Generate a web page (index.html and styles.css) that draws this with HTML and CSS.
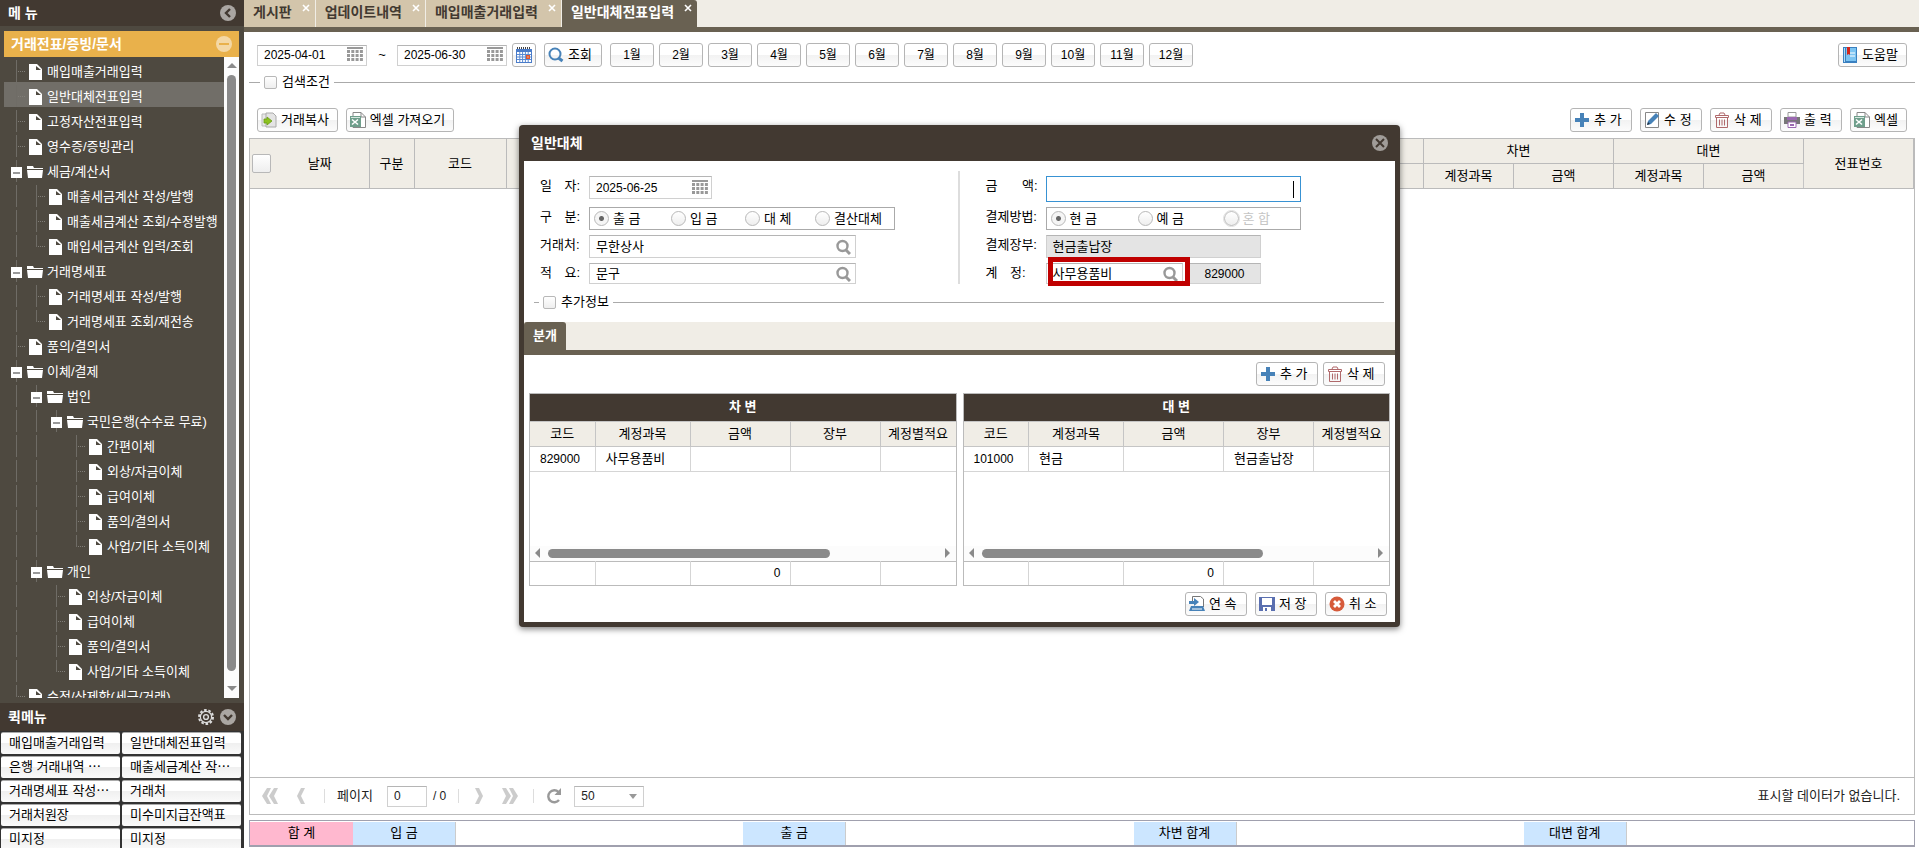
FILE: index.html
```html
<!DOCTYPE html>
<html lang="ko">
<head>
  <meta charset="UTF-8">
  <title>일반대체전표입력</title>
  <link rel="stylesheet" href="styles.css">
</head>
<body>

  <!-- icon sprite -->
  <svg class="sprite" width="0" height="0">
    <symbol id="i-file" viewBox="0 0 16 16"><path d="M2 0h8l5 5v11H2z" fill="#fff"/><path d="M9 2v4h5z" fill="#4e4940"/></symbol>
    <symbol id="i-folder" viewBox="0 0 16 16"><path d="M0 2h6l1 2h9v1H0z" fill="#fff"/><path d="M0 6h16l-1 8H1z" fill="#fff"/></symbol>
    <symbol id="i-left" viewBox="0 0 16 16"><circle cx="8" cy="8" r="8" fill="#aaa6a2"/><path d="M10 4L6 8l4 4" fill="none" stroke="#423931" stroke-width="2.4"/></symbol>
    <symbol id="i-down" viewBox="0 0 16 16"><circle cx="8" cy="8" r="8" fill="#aaa6a2"/><path d="M4 6l4 4 4-4" fill="none" stroke="#423931" stroke-width="2.4"/></symbol>
    <symbol id="i-minus" viewBox="0 0 16 16"><circle cx="8" cy="8" r="8" fill="#f4d8a5"/><path d="M3 8h10" stroke="#e9b14b" stroke-width="2"/></symbol>
    <symbol id="i-close" viewBox="0 0 16 16"><circle cx="8" cy="8" r="8" fill="#a09c98"/><path d="M4 4l8 8M12 4l-8 8" stroke="#423931" stroke-width="2"/></symbol>
    <symbol id="i-gear" viewBox="0 0 16 16"><circle cx="8" cy="8" r="7" fill="none" stroke="#ddd" stroke-width="2" stroke-dasharray="2.6 1.8"/><circle cx="8" cy="8" r="5.6" fill="none" stroke="#ddd" stroke-width="1.2"/><circle cx="8" cy="8" r="2.4" fill="none" stroke="#ddd" stroke-width="1.4"/></symbol>
    <symbol id="i-x" viewBox="0 0 8 8"><path d="M1 1l6 6M7 1L1 7" stroke="#fff" stroke-width="1.6"/></symbol>
    <symbol id="i-date" viewBox="0 0 16 16"><path d="M0 0h16v2H0z" fill="#999"/><path d="M0 4.500h16M0 8.500h16M0 12.500h16" stroke="#999" stroke-width="3" stroke-dasharray="3 1.3"/></symbol>
    <symbol id="i-cal" viewBox="0 0 16 16"><path d="M0 2h16v14H0z" fill="#4a7cc9"/><path d="M1 1h14" stroke="#444" stroke-width="2" stroke-dasharray="1 1"/><path d="M1 5h14v10H1z" fill="#fff"/><path d="M1 7.5h14M1 10h14M1 12.5h14M3.8 5v10M6.6 5v10M9.4 5v10M12.2 5v10" stroke="#5a8bd4"/><path d="M10 8h4v4h-4z" fill="#e0562e"/><path d="M11.500 9.500h1v1h-1z" fill="#fff"/></symbol>
    <symbol id="i-find" viewBox="0 0 16 16"><circle cx="7" cy="7" r="5.5" fill="none" stroke="#4782b8" stroke-width="2"/><path d="M10.500 11l4 3" stroke="#4782b8" stroke-width="3"/></symbol>
    <symbol id="i-search" viewBox="0 0 16 16"><circle cx="7.500" cy="7" r="5" fill="none" stroke="#999" stroke-width="2.400"/><path d="M11 11l4 4" stroke="#999" stroke-width="3"/></symbol>
    <symbol id="i-help" viewBox="0 0 16 16"><path d="M1 0h14v16H1z" fill="#3a80c0"/><path d="M4 1h10v13H4z" fill="#7cc4f2"/><path d="M2 1h1v14H2z" fill="#b5dcf5"/><path d="M5 0h3v8L6.500 7 5 8z" fill="#d3281c"/><path d="M8 6h5M8 9h5" stroke="#fff"/></symbol>
    <symbol id="i-copy" viewBox="0 0 16 16"><path d="M1 2h8v12H1z" fill="#e8e8e8" stroke="#bbb"/><path d="M5 1h7l3 3v11H5z" fill="#e4e4e4" stroke="#aaa"/><path d="M3 7h3V5l5 4-5 4v-2H3z" fill="#8cc21f" stroke="#6b9c14" stroke-width=".8"/></symbol>
    <symbol id="i-excel" viewBox="0 0 16 16"><path d="M3 .5h8l4.500 4.500v10.500H3z" fill="#fff" stroke="#888"/><path d="M11 .5V5h4.500" fill="none" stroke="#888"/><path d="M0 4h11v11H0z" fill="#6f9f8c"/><path d="M2 7.500l6 5M8 7.500L2 12.500" stroke="#fff" stroke-width="1.6"/><path d="M1 5.500h9" stroke="#d5e6df"/></symbol>
    <symbol id="i-add" viewBox="0 0 16 16"><path d="M6 1h4v5h5v4h-5v5H6v-5H1V6h5z" fill="#4782b8"/></symbol>
    <symbol id="i-edit" viewBox="0 0 16 16"><path d="M1.500.5h13v15h-13z" fill="#fff" stroke="#888"/><path d="M3 13l1-4 8-8 3 3-8 8z" fill="#4782b8"/><path d="M3 13l3-1-2-2z" fill="#234"/></symbol>
    <symbol id="i-del" viewBox="0 0 16 16"><path d="M2.500 5.500h11v10h-11zM1.500 3.500h13v2h-13zM5 3l1-2h4l1 2M5.500 7.500v6M8 7.500v6M10.500 7.500v6" fill="none" stroke="#b0696b"/></symbol>
    <symbol id="i-print" viewBox="0 0 16 16"><path d="M4 .5h8V5H4z" fill="#fff" stroke="#999"/><path d="M0 5h16v7H0z" fill="#777"/><path d="M3 5h10v3H3z" fill="#9a68b0"/><path d="M4 10h8v5.500H4z" fill="#fff" stroke="#9a68b0"/><path d="M6 13h4" stroke="#9a68b0" stroke-width="2"/></symbol>
    <symbol id="i-next" viewBox="0 0 16 16"><path d="M3.500 7V.5h8L14.500 3v8" fill="#fff" stroke="#777"/><path d="M0 5h5V2l5 4-5 4V8H0z" fill="#4782b8"/><path d="M2 10h12l2 5H0z" fill="#4782b8"/><path d="M3 13h10" stroke="#fff"/></symbol>
    <symbol id="i-save" viewBox="0 0 16 16"><path d="M0 1h16v14H0z" fill="#5a6fb0"/><path d="M3 2h10v7H3z" fill="#fff"/><path d="M4 11h8v4H4z" fill="#fff"/><path d="M6 12h2v3H6z" fill="#5a6fb0"/></symbol>
    <symbol id="i-cancel" viewBox="0 0 16 16"><circle cx="8" cy="8" r="7.500" fill="#d65a3a"/><path d="M5 5l6 6M11 5l-6 6" stroke="#fff" stroke-width="2.800"/></symbol>
    <symbol id="i-prev" viewBox="0 0 16 16"><path d="M8 0h4L8 8l4 8H8L4 8z" fill="#ccc"/></symbol>
    <symbol id="i-first" viewBox="0 0 16 16"><path d="M5 0h4L5 8l4 8H5L0 8zM12 0h4l-4 8 4 8h-4L7 8z" fill="#ccc"/></symbol>
    <symbol id="i-reload" viewBox="0 0 16 16"><path d="M12.500 4A6 6 0 1 0 13 12" fill="none" stroke="#999" stroke-width="2.400"/><path d="M15 0v7H8.500z" fill="#999"/></symbol>
  </svg>

  <aside class="sidebar">
    <header class="side-head">
      <h2>메 뉴</h2>
      <button class="plain" aria-label="메뉴 접기"><svg class="icon"><use href="#i-left"/></svg></button>
    </header>

    <nav class="menu">
      <div class="menu-title">
        <span>거래전표/증빙/문서</span>
        <button class="plain" aria-label="접기"><svg class="icon"><use href="#i-minus"/></svg></button>
      </div>
      <div class="menu-body">
        <ul class="tree">
          <li><i class="line tee"></i><svg class="icon"><use href="#i-file"/></svg><a href="#">매입매출거래입력</a></li>
          <li class="on"><i class="line tee"></i><svg class="icon"><use href="#i-file"/></svg><a href="#">일반대체전표입력</a></li>
          <li><i class="line tee"></i><svg class="icon"><use href="#i-file"/></svg><a href="#">고정자산전표입력</a></li>
          <li><i class="line tee"></i><svg class="icon"><use href="#i-file"/></svg><a href="#">영수증/증빙관리</a></li>
          <li><i class="line open"></i><svg class="icon"><use href="#i-folder"/></svg><a href="#">세금/계산서</a></li>
          <li><i class="line"></i><i class="line tee"></i><svg class="icon"><use href="#i-file"/></svg><a href="#">매출세금계산 작성/발행</a></li>
          <li><i class="line"></i><i class="line tee"></i><svg class="icon"><use href="#i-file"/></svg><a href="#">매출세금계산 조회/수정발행</a></li>
          <li><i class="line"></i><i class="line tee end"></i><svg class="icon"><use href="#i-file"/></svg><a href="#">매입세금계산 입력/조회</a></li>
          <li><i class="line open"></i><svg class="icon"><use href="#i-folder"/></svg><a href="#">거래명세표</a></li>
          <li><i class="line"></i><i class="line tee"></i><svg class="icon"><use href="#i-file"/></svg><a href="#">거래명세표 작성/발행</a></li>
          <li><i class="line"></i><i class="line tee end"></i><svg class="icon"><use href="#i-file"/></svg><a href="#">거래명세표 조회/재전송</a></li>
          <li><i class="line tee"></i><svg class="icon"><use href="#i-file"/></svg><a href="#">품의/결의서</a></li>
          <li><i class="line open"></i><svg class="icon"><use href="#i-folder"/></svg><a href="#">이체/결제</a></li>
          <li><i class="line"></i><i class="line open"></i><svg class="icon"><use href="#i-folder"/></svg><a href="#">법인</a></li>
          <li><i class="line"></i><i class="line"></i><i class="line open"></i><svg class="icon"><use href="#i-folder"/></svg><a href="#">국민은행(수수료 무료)</a></li>
          <li><i class="line"></i><i class="line"></i><i class="gap"></i><i class="line tee"></i><svg class="icon"><use href="#i-file"/></svg><a href="#">간편이체</a></li>
          <li><i class="line"></i><i class="line"></i><i class="gap"></i><i class="line tee"></i><svg class="icon"><use href="#i-file"/></svg><a href="#">외상/자금이체</a></li>
          <li><i class="line"></i><i class="line"></i><i class="gap"></i><i class="line tee"></i><svg class="icon"><use href="#i-file"/></svg><a href="#">급여이체</a></li>
          <li><i class="line"></i><i class="line"></i><i class="gap"></i><i class="line tee"></i><svg class="icon"><use href="#i-file"/></svg><a href="#">품의/결의서</a></li>
          <li><i class="line"></i><i class="line"></i><i class="gap"></i><i class="line tee end"></i><svg class="icon"><use href="#i-file"/></svg><a href="#">사업/기타 소득이체</a></li>
          <li><i class="line"></i><i class="line open"></i><svg class="icon"><use href="#i-folder"/></svg><a href="#">개인</a></li>
          <li><i class="line"></i><i class="gap"></i><i class="line tee"></i><svg class="icon"><use href="#i-file"/></svg><a href="#">외상/자금이체</a></li>
          <li><i class="line"></i><i class="gap"></i><i class="line tee"></i><svg class="icon"><use href="#i-file"/></svg><a href="#">급여이체</a></li>
          <li><i class="line"></i><i class="gap"></i><i class="line tee"></i><svg class="icon"><use href="#i-file"/></svg><a href="#">품의/결의서</a></li>
          <li><i class="line"></i><i class="gap"></i><i class="line tee end"></i><svg class="icon"><use href="#i-file"/></svg><a href="#">사업/기타 소득이체</a></li>
          <li><i class="line tee end"></i><svg class="icon"><use href="#i-file"/></svg><a href="#">수정/삭제함(세금/거래)</a></li>
        </ul>
        <div class="vscroll"><i class="arrow up"></i><i class="thumb"></i><i class="arrow down"></i></div>
      </div>
    </nav>

    <header class="side-head quick-head">
      <h2>퀵메뉴</h2>
      <button class="plain" aria-label="설정"><svg class="icon"><use href="#i-gear"/></svg></button>
      <button class="plain" aria-label="접기"><svg class="icon"><use href="#i-down"/></svg></button>
    </header>
    <div class="quick">
      <button>매입매출거래입력</button><button>일반대체전표입력</button>
      <button>은행 거래내역 ⋯</button><button>매출세금계산 작⋯</button>
      <button>거래명세표 작성⋯</button><button>거래처</button>
      <button>거래처원장</button><button>미수미지급잔액표</button>
      <button>미지정</button><button>미지정</button>
    </div>
  </aside>

  <main class="main">
    <nav class="tabs">
      <div class="tab"><a href="#">게시판</a><button class="plain" aria-label="닫기"><svg><use href="#i-x"/></svg></button></div>
      <div class="tab"><a href="#">업데이트내역</a><button class="plain" aria-label="닫기"><svg><use href="#i-x"/></svg></button></div>
      <div class="tab"><a href="#">매입매출거래입력</a><button class="plain" aria-label="닫기"><svg><use href="#i-x"/></svg></button></div>
      <div class="tab active"><a href="#">일반대체전표입력</a><button class="plain" aria-label="닫기"><svg><use href="#i-x"/></svg></button></div>
    </nav>

    <div class="content">
      <div class="filters">
        <div class="field date"><input type="text" value="2025-04-01" aria-label="시작일"><button class="plain" aria-label="달력"><svg class="icon"><use href="#i-date"/></svg></button></div>
        <span class="tilde">~</span>
        <div class="field date"><input type="text" value="2025-06-30" aria-label="종료일"><button class="plain" aria-label="달력"><svg class="icon"><use href="#i-date"/></svg></button></div>
        <button class="btn btn-cal" aria-label="기간 선택"><svg class="icon"><use href="#i-cal"/></svg></button>
        <button class="btn btn-find"><svg class="icon"><use href="#i-find"/></svg>조회</button>
        <div class="months">
          <button class="btn">1월</button><button class="btn">2월</button><button class="btn">3월</button><button class="btn">4월</button>
          <button class="btn">5월</button><button class="btn">6월</button><button class="btn">7월</button><button class="btn">8월</button>
          <button class="btn">9월</button><button class="btn">10월</button><button class="btn">11월</button><button class="btn">12월</button>
        </div>
        <button class="btn push"><svg class="icon"><use href="#i-help"/></svg>도움말</button>
      </div>

      <div class="divider"><label><input type="checkbox">검색조건</label></div>

      <div class="toolbar">
        <button class="btn"><svg class="icon"><use href="#i-copy"/></svg>거래복사</button>
        <button class="btn"><svg class="icon"><use href="#i-excel"/></svg>엑셀 가져오기</button>
        <button class="btn wide push"><svg class="icon"><use href="#i-add"/></svg>추 가</button>
        <button class="btn wide"><svg class="icon"><use href="#i-edit"/></svg>수 정</button>
        <button class="btn wide"><svg class="icon"><use href="#i-del"/></svg>삭 제</button>
        <button class="btn wide"><svg class="icon"><use href="#i-print"/></svg>출 력</button>
        <button class="btn"><svg class="icon"><use href="#i-excel"/></svg>엑셀</button>
      </div>

      <section class="grid">
        <table>
          <colgroup>
            <col class="w119"><col class="w45"><col class="w92"><col><col class="w90"><col class="w100">
            <col class="w90"><col class="w100"><col class="w90"><col class="w100"><col class="w110">
          </colgroup>
          <thead>
            <tr>
              <th rowspan="2"><div class="check-all"><input type="checkbox" aria-label="전체 선택"><span>날짜</span></div></th>
              <th rowspan="2">구분</th>
              <th rowspan="2">코드</th>
              <th rowspan="2"></th>
              <th colspan="2"></th>
              <th colspan="2">차변</th>
              <th colspan="2">대변</th>
              <th rowspan="2">전표번호</th>
            </tr>
            <tr><th></th><th></th><th>계정과목</th><th>금액</th><th>계정과목</th><th>금액</th></tr>
          </thead>
        </table>
        <footer class="paging">
          <button class="plain" aria-label="처음"><svg class="icon"><use href="#i-first"/></svg></button>
          <button class="plain" aria-label="이전"><svg class="icon"><use href="#i-prev"/></svg></button>
          <i class="sep"></i>
          <label for="page">페이지</label>
          <div class="field page"><input type="text" id="page" value="0"></div>
          <span class="total">/ 0</span>
          <i class="sep"></i>
          <button class="plain flip" aria-label="다음"><svg class="icon"><use href="#i-prev"/></svg></button>
          <button class="plain flip" aria-label="마지막"><svg class="icon"><use href="#i-first"/></svg></button>
          <i class="sep"></i>
          <button class="plain" aria-label="새로고침"><svg class="icon"><use href="#i-reload"/></svg></button>
          <div class="select"><select aria-label="페이지 크기"><option>50</option></select></div>
          <span class="push">표시할 데이터가 없습니다.</span>
        </footer>
      </section>

      <div class="summary">
        <span class="sum">합 계</span>
        <span>입 금</span><span></span>
        <span>출 금</span><span></span>
        <span>차변 합계</span><span></span>
        <span>대변 합계</span><span></span>
      </div>
    </div>
  </main>

  <div class="overlay">
    <section class="dialog" role="dialog" aria-labelledby="dialog-title">
      <header>
        <h2 id="dialog-title">일반대체</h2>
        <button class="plain" aria-label="닫기"><svg class="icon"><use href="#i-close"/></svg></button>
      </header>
      <div class="dialog-body">
        <form class="form">
          <div class="form-col">
            <label class="name" for="date"><span>일</span><span>자:</span></label>
            <div class="field date"><input type="text" id="date" value="2025-06-25"><button type="button" class="plain" aria-label="달력"><svg class="icon"><use href="#i-date"/></svg></button></div>
            <div class="name"><span>구</span><span>분:</span></div>
            <div class="radios kinds">
              <label><input type="radio" name="kind" checked>출 금</label>
              <label><input type="radio" name="kind">입 금</label>
              <label><input type="radio" name="kind">대 체</label>
              <label><input type="radio" name="kind">결산대체</label>
            </div>
            <label class="name" for="customer">거래처:</label>
            <div class="field"><input type="text" id="customer" value="무한상사"><button type="button" class="plain" aria-label="검색"><svg class="icon"><use href="#i-search"/></svg></button></div>
            <label class="name" for="memo"><span>적</span><span>요:</span></label>
            <div class="field low"><input type="text" id="memo" value="문구"><button type="button" class="plain" aria-label="검색"><svg class="icon"><use href="#i-search"/></svg></button></div>
          </div>
          <div class="form-col right">
            <label class="name" for="amount"><span>금</span><span>액:</span></label>
            <div class="field focus"><input type="text" id="amount"><i class="caret"></i></div>
            <div class="name">결제방법:</div>
            <div class="radios methods">
              <label><input type="radio" name="method" checked>현 금</label>
              <label><input type="radio" name="method">예 금</label>
              <label class="off"><input type="radio" name="method" disabled>혼 합</label>
            </div>
            <label class="name" for="book">결제장부:</label>
            <div class="field readonly"><input type="text" id="book" value="현금출납장" readonly></div>
            <label class="name short" for="account"><span>계</span><span>정:</span></label>
            <div class="account">
              <div class="field low"><input type="text" id="account" value="사무용품비"><button type="button" class="plain" aria-label="검색"><svg class="icon"><use href="#i-search"/></svg></button></div>
              <div class="field low readonly code"><input type="text" value="829000" aria-label="계정코드" readonly></div>
              <i class="mark"></i>
            </div>
          </div>
        </form>

        <div class="divider"><label><input type="checkbox">추가정보</label></div>

        <div class="subtabs"><button class="plain">분개</button></div>

        <div class="actions">
          <button class="btn wide"><svg class="icon"><use href="#i-add"/></svg>추 가</button>
          <button class="btn wide"><svg class="icon"><use href="#i-del"/></svg>삭 제</button>
        </div>

        <div class="ledgers">
          <div class="ledger">
            <table>
              <caption>차 변</caption>
              <thead><tr><th class="w65">코드</th><th class="w95">계정과목</th><th class="w100">금액</th><th class="w90">장부</th><th>계정별적요</th></tr></thead>
              <tbody><tr><td class="num">829000</td><td>사무용품비</td><td></td><td></td><td></td></tr></tbody>
            </table>
            <div class="hscroll"><i class="arrow prev"></i><i class="thumb"></i><i class="arrow next"></i></div>
            <table class="foot">
              <tbody><tr><td class="w65"></td><td class="w95"></td><td class="w100 sum">0</td><td class="w90"></td><td></td></tr></tbody>
            </table>
          </div>
          <div class="ledger">
            <table>
              <caption>대 변</caption>
              <thead><tr><th class="w65">코드</th><th class="w95">계정과목</th><th class="w100">금액</th><th class="w90">장부</th><th>계정별적요</th></tr></thead>
              <tbody><tr><td class="num">101000</td><td>현금</td><td></td><td>현금출납장</td><td></td></tr></tbody>
            </table>
            <div class="hscroll"><i class="arrow prev"></i><i class="thumb"></i><i class="arrow next"></i></div>
            <table class="foot">
              <tbody><tr><td class="w65"></td><td class="w95"></td><td class="w100 sum">0</td><td class="w90"></td><td></td></tr></tbody>
            </table>
          </div>
        </div>

        <div class="actions bottom">
          <button class="btn wide"><svg class="icon"><use href="#i-next"/></svg>연 속</button>
          <button class="btn wide"><svg class="icon"><use href="#i-save"/></svg>저 장</button>
          <button class="btn wide"><svg class="icon"><use href="#i-cancel"/></svg>취 소</button>
        </div>
      </div>
    </section>
  </div>

</body>
</html>
```

FILE: styles.css
```css
* {
  box-sizing: border-box;
}
body {
  margin: 0;
  height: 100vh;
  display: flex;
  overflow: hidden;
  font-family: "Liberation Sans", "Noto Sans CJK KR", sans-serif;
  font-size: 13px;
  line-height: 16px;
  color: #000;
  background: #fff;
}
button, input, select {
  font: inherit;
  color: inherit;
  margin: 0;
}
h2 {
  margin: 0;
  font-size: 14px;
  font-weight: bold;
}
a {
  color: inherit;
  text-decoration: none;
}
i {
  display: block;
}
.sprite {
  position: absolute;
}
.icon {
  display: block;
  width: 16px;
  height: 16px;
  flex: none;
}
.plain {
  display: block;
  padding: 0;
  border: 0;
  background: none;
  flex: none;
}
.push {
  margin-left: auto;
}

/* sidebar */
.sidebar {
  width: 244px;
  flex: none;
  display: flex;
  flex-direction: column;
  background: #4e4940;
  color: #fff;
}
.side-head {
  display: flex;
  align-items: center;
  gap: 6px;
  height: 26px;
  flex: none;
  padding: 0 8px;
  background: #423931;
}
.side-head h2 {
  flex: 1;
}
.quick-head {
  height: 28px;
}
.menu {
  flex: 1;
  min-height: 0;
  display: flex;
  flex-direction: column;
  padding: 5px 5px 5px 4px;
}
.menu-title {
  display: flex;
  align-items: center;
  justify-content: space-between;
  height: 26px;
  flex: none;
  padding: 0 7px;
  background: #e9b14b;
  font-size: 14px;
  font-weight: bold;
}
.menu-body {
  flex: 1;
  min-height: 0;
  display: flex;
}
.tree {
  flex: 1;
  min-width: 0;
  margin: 0;
  padding: 0;
  list-style: none;
  overflow: hidden;
}
.tree li {
  display: flex;
  align-items: center;
  height: 25px;
  padding-left: 3px;
  white-space: nowrap;
}
.tree li.on {
  background: #716e68;
}
.tree a {
  padding: 4px 0 0 4px;
}
.tree .icon {
  margin-top: 5px;
}
.line, .gap {
  position: relative;
  width: 20px;
  height: 25px;
  flex: none;
}
.line::before {
  content: "";
  position: absolute;
  left: 9px;
  top: 3px;
  width: 1px;
  height: 22px;
  background: #6f6c66;
}
.line.tee::after {
  content: "";
  position: absolute;
  left: 11px;
  top: 14px;
  width: 7px;
  border-top: 1px dotted #807d77;
}
.line.end::before {
  height: 12px;
}
.line.open::after {
  content: "";
  position: absolute;
  left: 4px;
  top: 10px;
  width: 11px;
  height: 11px;
  background: linear-gradient(#999, #999) center / 7px 2px no-repeat #fff;
}

/* scrollbars */
.arrow {
  width: 0;
  height: 0;
  flex: none;
  border: 5px solid transparent;
}
.arrow.up {
  border-top: 0;
  border-bottom-color: #8a8a8a;
}
.arrow.down {
  border-bottom: 0;
  border-top-color: #8a8a8a;
}
.arrow.prev {
  border-left: 0;
  border-right-color: #8a8a8a;
}
.arrow.next {
  border-right: 0;
  border-left-color: #8a8a8a;
  margin-left: auto;
}
.thumb {
  background: #8a8a8a;
  border-radius: 5px;
}
.vscroll {
  width: 15px;
  display: flex;
  flex-direction: column;
  align-items: center;
  padding: 6px 0 7px;
  background: #fcfcfc;
}
.vscroll .thumb {
  flex: 1;
  width: 9px;
  margin: 7px 0 15px;
}
.hscroll {
  display: flex;
  align-items: center;
  height: 15px;
  padding: 0 6px 0 5px;
  background: #fcfcfc;
}
.hscroll .thumb {
  width: 68%;
  height: 9px;
  margin-left: 8px;
}

/* quick menu */
.quick {
  display: grid;
  grid-template-columns: 1fr 1fr;
  grid-auto-rows: 22px;
  gap: 2px;
  height: 117px;
  flex: none;
  padding: 1px 3px 0 1px;
  overflow: hidden;
  background: #333;
}
.quick button {
  padding: 0 0 1px 8px;
  border: 0;
  border-top: 1px solid #aaa;
  border-radius: 2px;
  text-align: left;
  white-space: nowrap;
  overflow: hidden;
  background: linear-gradient(#fff 50%, #f0f0f0 50%, #fafafa);
  color: #000;
}

/* main area */
.main {
  flex: 1;
  min-width: 0;
  display: flex;
  flex-direction: column;
}
.tabs {
  display: flex;
  gap: 1px;
  height: 32px;
  flex: none;
  border-bottom: 5px solid #696152;
  background: #f0ede6;
}
.tab {
  display: flex;
  padding: 4px 5px 0 9px;
  background: #d3c5ab;
  color: #423931;
  font-size: 14px;
  font-weight: bold;
}
.tab.active {
  background: #696152;
  color: #fff;
  border-radius: 0 3px 0 0;
}
.tab svg {
  display: block;
  width: 8px;
  height: 8px;
}
.tab button {
  height: 8px;
  margin-left: 10px;
}
.content {
  flex: 1;
  min-height: 0;
  display: flex;
  flex-direction: column;
  padding: 11px 4px 1px 5px;
}
.btn {
  display: flex;
  align-items: center;
  gap: 4px;
  height: 24px;
  padding: 0 8px 1px 3px;
  border: 1px solid #b5b5b5;
  border-radius: 3px;
  white-space: nowrap;
  background: linear-gradient(#fff 50%, #f2f2f2 50%, #fcfcfc);
}
.btn.wide {
  min-width: 62px;
}
.field {
  display: flex;
  align-items: center;
  height: 21px;
  padding-right: 4px;
  border: 1px solid #d0d0d0;
  border-top-color: #b5b5b5;
  background: #fff;
}
.field input {
  flex: 1;
  min-width: 0;
  padding: 0 0 0 6px;
  border: 0;
  outline: 0;
  background: none;
}
.field.date {
  width: 110px;
  padding-right: 3px;
}
.field.date input {
  font-size: 12px;
}
.filters {
  display: flex;
  align-items: center;
  padding: 0 8px;
}
.tilde {
  width: 30px;
  text-align: center;
}
.btn-cal {
  margin-left: 5px;
  padding: 0 3px;
}
.btn-find {
  width: 58px;
  margin: 0 8px;
}
.months {
  display: flex;
  gap: 5px;
}
.months .btn {
  width: 44px;
  padding: 0 0 1px;
  justify-content: center;
  font-size: 12px;
}
.divider {
  display: flex;
  align-items: center;
  gap: 4px;
  height: 16px;
  margin: 7px 0 18px;
}
.divider::before, .divider::after {
  content: "";
  width: 11px;
  border-top: 1px solid #aaa;
}
.divider::after {
  flex: 1;
}
.divider label {
  display: flex;
  align-items: center;
  gap: 5px;
}
input[type="checkbox"], input[type="radio"] {
  appearance: none;
  flex: none;
  width: 13px;
  height: 13px;
  border: 1px solid #b8b8b8;
  border-radius: 2px;
  background: linear-gradient(#fff, #eee);
}
.toolbar {
  display: flex;
  gap: 8px;
  padding: 0 8px;
}

/* list */
table {
  width: 100%;
  border-collapse: collapse;
  table-layout: fixed;
}
th, td {
  padding: 0;
  font-weight: normal;
}
.w45 { width: 45px; }
.w65 { width: 65px; }
.w90 { width: 90px; }
.w92 { width: 92px; }
.w95 { width: 95px; }
.w100 { width: 100px; }
.w110 { width: 110px; }
.w119 { width: 119px; }
.grid {
  flex: 1;
  display: flex;
  flex-direction: column;
  justify-content: space-between;
  margin-top: 6px;
  border: 1px solid #bbb;
  border-top: 0;
}
.grid th {
  height: 25px;
  border: 1px solid #bbb;
  border-left-color: #c5c5c5;
  background: #f0ede6;
}
.grid th:first-child {
  border-left: 0;
}
.check-all {
  display: flex;
  align-items: center;
  padding-left: 2px;
}
.check-all input {
  width: 19px;
  height: 19px;
}
.check-all span {
  flex: 1;
}
.paging {
  display: flex;
  align-items: center;
  height: 37px;
  padding: 0 14px 0 12px;
  border-top: 1px solid #bbb;
  color: #222;
}
.paging .plain {
  margin-right: 15px;
}
.paging .flip {
  transform: scaleX(-1);
}
.sep {
  width: 1px;
  height: 14px;
  margin-right: 12px;
  background: #ddd;
}
.field.page {
  width: 40px;
  margin: 0 6px 0 14px;
}
.field.page, .select, .total {
  font-size: 12px;
}
.total {
  margin-right: 12px;
}
.paging .plain + .select {
  margin-left: -3px;
}
.select {
  position: relative;
  width: 70px;
}
.select select {
  display: block;
  width: 100%;
  height: 21px;
  padding: 0 6px;
  border: 1px solid #d0d0d0;
  border-top-color: #b5b5b5;
  appearance: none;
  background: #fff;
}
.select::after {
  content: "";
  position: absolute;
  right: 7px;
  top: 8px;
  border: 4px solid transparent;
  border-top: 5px solid #999;
  border-bottom: 0;
}
.summary {
  display: grid;
  grid-template-columns: 103px 103px 1fr 103px 1fr 103px 1fr 103px 1fr;
  height: 27px;
  flex: none;
  margin-top: 5px;
  padding-top: 1px;
  border: 1px solid #a0a0ae;
  border-bottom-width: 2px;
}
.summary span {
  padding-top: 3px;
  text-align: center;
}
.summary span:nth-child(even) {
  border-right: 1px solid #ccc;
  background: #cce6ff;
}
.summary .sum {
  background: #ffb8cf;
}

/* dialog */
.overlay {
  position: absolute;
  top: 125px;
  left: 0;
  right: 0;
  display: flex;
  justify-content: center;
  pointer-events: none;
}
.dialog {
  width: 881px;
  padding: 0 5px 5px;
  border-radius: 4px;
  background: #423931;
  box-shadow: 0 2px 6px rgba(0, 0, 0, 0.5);
  pointer-events: auto;
}
.dialog > header {
  display: flex;
  align-items: center;
  justify-content: space-between;
  height: 36px;
  padding: 0 7px;
  color: #fff;
}
.dialog-body {
  padding-top: 10px;
  background: #fff;
}
.form {
  display: grid;
  grid-template-columns: 1fr 1fr;
}
.form-col {
  display: grid;
  grid-template-columns: 40px 1fr;
  grid-template-rows: 31px 28px 28px 21px;
  column-gap: 9px;
  align-items: start;
  justify-items: start;
  padding: 5px 0 0 16px;
  border-right: 2px solid #ddd;
}
.form-col.right {
  grid-template-columns: 52px 1fr;
  column-gap: 8px;
  padding-left: 26px;
  border: 0;
}
.name {
  display: flex;
  justify-content: space-between;
  width: 100%;
  padding-top: 2px;
}
.name.short {
  width: 40px;
}
.form .field {
  width: 267px;
  height: 23px;
}
.form .field.date {
  width: 123px;
}
.form .field.focus {
  width: 255px;
  height: 26px;
  border-color: #3892d3;
}
.form .field.low {
  height: 21px;
}
.form .readonly {
  width: 215px;
  background: #e4e4e4;
}
.field .caret {
  width: 1px;
  height: 17px;
  margin-right: 2px;
  background: #000;
}
.radios {
  display: grid;
  height: 23px;
  padding-left: 4px;
  border: 1px solid #aaa;
}
.radios.kinds {
  width: 306px;
  grid-template-columns: 77px 74px 70px 1fr;
}
.radios.methods {
  width: 255px;
  grid-template-columns: 87px 86px 1fr;
}
.radios label {
  display: flex;
  align-items: center;
  gap: 4px;
}
.radios input {
  width: 15px;
  height: 15px;
  border-radius: 50%;
}
.radios input:checked {
  background: radial-gradient(#666 2px, #f5f5f5 3px);
}
.radios .off {
  color: #c5c5c5;
}
.radios .off input {
  outline: 1px solid #e0e0e0;
}
.account {
  position: relative;
  display: flex;
  gap: 6px;
}
.account .field {
  width: 137px;
}
.account .field.code {
  width: 72px;
  padding: 0;
}
.field.code input {
  padding: 0;
  font-size: 12px;
  text-align: center;
}
/* highlight frame around the account box */
.mark {
  position: absolute;
  left: 2px;
  top: -6px;
  width: 142px;
  height: 29px;
  border: 5px solid #c00000;
}
.dialog .divider {
  margin: 10px 11px 12px 10px;
}
.dialog .divider::before {
  width: 5px;
}
.subtabs {
  height: 33px;
  border-bottom: 5px solid #696152;
  background: #f0ede6;
}
.subtabs button {
  width: 42px;
  height: 28px;
  border-radius: 3px 3px 0 0;
  background: #696152;
  color: #fff;
  font-weight: bold;
}
.actions {
  display: flex;
  justify-content: flex-end;
  gap: 5px;
  padding: 7px 10px;
}
.actions.bottom {
  gap: 8px;
  padding: 6px 8px;
}
.ledgers {
  display: grid;
  grid-template-columns: 1fr 1fr;
  gap: 6px;
  padding: 0 5px;
}
.ledger {
  display: flex;
  flex-direction: column;
  height: 193px;
  border: 1px solid #bbb;
}
.ledger caption {
  height: 27px;
  padding-top: 5px;
  background: #423931;
  color: #fff;
  font-weight: bold;
}
.ledger th {
  height: 25px;
  border: 1px solid #c5c5c5;
  background: #f0ede6;
}
.ledger td {
  height: 25px;
  padding-left: 10px;
  border: 1px solid #d5d5d5;
}
.ledger th:first-child, .ledger td:first-child {
  border-left: 0;
}
.ledger th:last-child, .ledger td:last-child {
  border-right: 0;
}
.ledger .num, .ledger .sum {
  font-size: 12px;
}
.ledger .sum {
  padding-right: 9px;
  text-align: right;
}
.hscroll {
  margin-top: auto;
}
.foot td {
  height: 24px;
  border-top-color: #bbb;
  border-bottom: 0;
}
```
